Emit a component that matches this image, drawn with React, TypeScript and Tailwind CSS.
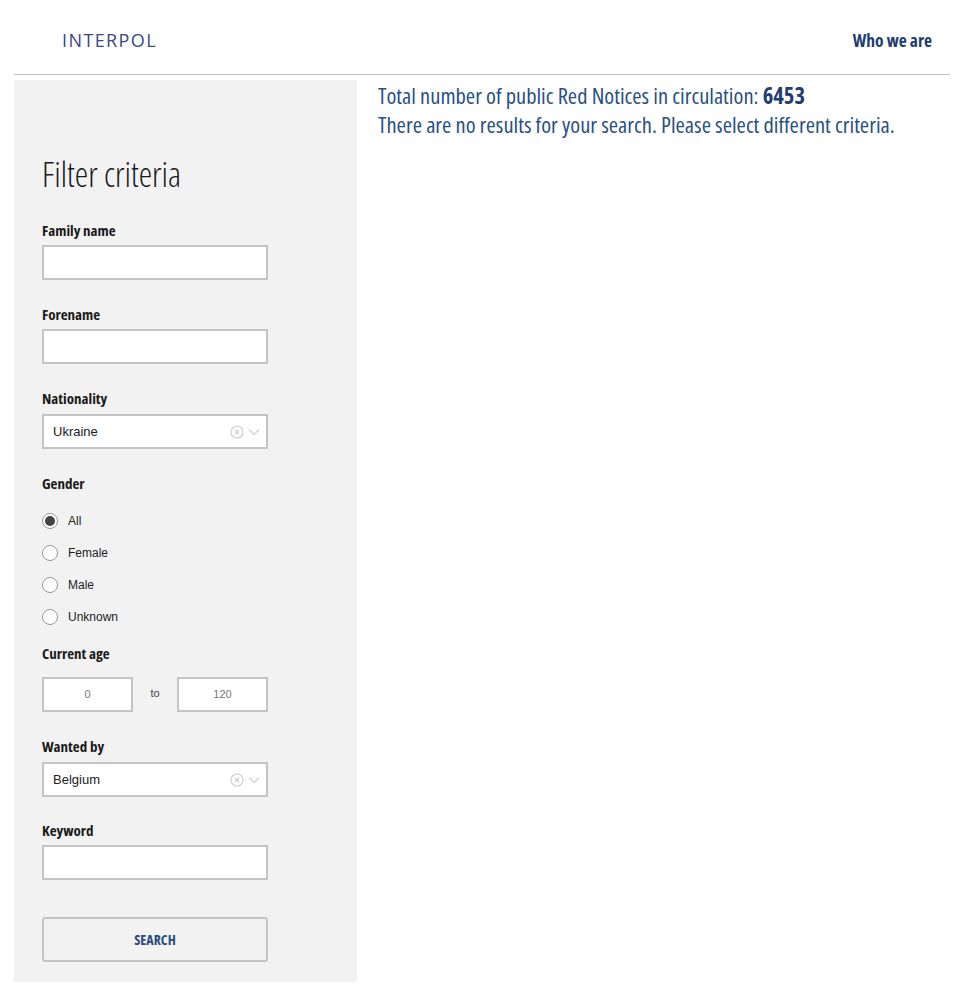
import { useState } from "react"

const cond = "font-['Open_Sans',sans-serif] font-stretch-[75%]"

const Label = ({ text }: { text: string }) => (
    <p className={`${cond} text-[15px] font-bold text-[#1a1a1a] leading-none`}>{text}</p>
)

const TextBox = () => (
    <input type="text" className="w-[226px] h-[35px] bg-white border-2 border-[#c4c4c4] outline-0 px-2" />
)

const SelectBox = ({ value }: { value: string }) => (
    <div className="w-[226px] h-[35px] bg-white border-2 border-[#c4c4c4] flex items-center justify-between pl-[9px] pr-[6px]">
        <span className="font-['Liberation_Sans',Arial,sans-serif] text-[13px] text-[#222]">{value}</span>
        <div className="flex items-center gap-[4px]">
            <svg width="14" height="14" viewBox="0 0 14 14" fill="none" stroke="#cfcfcf" strokeWidth="1.2">
                <circle cx="7" cy="7" r="6" />
                <path d="M5 5l4 4M9 5l-4 4" />
            </svg>
            <svg width="12" height="8" viewBox="0 0 12 8" fill="none" stroke="#cfcfcf" strokeWidth="1.2">
                <path d="M1 1.5l5 5 5-5" />
            </svg>
        </div>
    </div>
)

export default function App() {
    const [gender, setGender] = useState("All")

    return (
        <div className="w-[964px] min-h-[990px] bg-white">
            <header className="h-[74px] flex items-center justify-between pl-[62px] pr-[32px] pt-[6px]">
                <span className="font-['Open_Sans',sans-serif] text-[18px] tracking-[1.4px] text-[#37478a]">INTERPOL</span>
                <a href="#" className={`${cond} text-[17.5px] font-bold text-[#1f3d70]`}>Who we are</a>
            </header>
            <div className="mx-[14px] border-t border-[#bdbdbd]" />
            <div className="flex pl-[14px] pt-[5px]">
                <aside className="w-[343px] shrink-0 h-[902px] bg-[#f2f2f2] pl-[28px] pt-[77px]">
                    <h2 className={`${cond} text-[34px] font-light text-[#1a1a1a] leading-none`}>Filter criteria</h2>

                    <div className="mt-[32px] flex flex-col gap-[7px]">
                        <Label text="Family name" />
                        <TextBox />
                    </div>
                    <div className="mt-[27px] flex flex-col gap-[7px]">
                        <Label text="Forename" />
                        <TextBox />
                    </div>
                    <div className="mt-[27px] flex flex-col gap-[8px]">
                        <Label text="Nationality" />
                        <SelectBox value="Ukraine" />
                    </div>

                    <div className="mt-[27px]">
                        <Label text="Gender" />
                        <div className="mt-[22px] flex flex-col gap-[16px]">
                            {["All", "Female", "Male", "Unknown"].map((g) => (
                                <label key={g} className="h-[16px] flex items-center gap-[10px] cursor-pointer">
                                    <span className="w-[16px] h-[16px] rounded-full border border-[#9a9a9a] bg-white flex items-center justify-center">
                                        {gender === g && <span className="w-[10px] h-[10px] rounded-full bg-[#444]" />}
                                    </span>
                                    <input type="radio" className="hidden" checked={gender === g} onChange={() => setGender(g)} />
                                    <span className="font-['Liberation_Sans',Arial,sans-serif] text-[12px] text-[#222]">{g}</span>
                                </label>
                            ))}
                        </div>
                    </div>

                    <div className="mt-[21px]">
                        <Label text="Current age" />
                        <div className="mt-[16px] flex items-center">
                            <div className="w-[91px] h-[35px] bg-white border-2 border-[#c4c4c4] flex items-center justify-center font-['Liberation_Sans',Arial,sans-serif] text-[11px] text-[#777]">0</div>
                            <span className="w-[44px] text-center font-['Liberation_Sans',Arial,sans-serif] text-[11px] text-[#444] -mt-[2px]">to</span>
                            <div className="w-[91px] h-[35px] bg-white border-2 border-[#c4c4c4] flex items-center justify-center font-['Liberation_Sans',Arial,sans-serif] text-[11px] text-[#777]">120</div>
                        </div>
                    </div>

                    <div className="mt-[27px] flex flex-col gap-[8px]">
                        <Label text="Wanted by" />
                        <SelectBox value="Belgium" />
                    </div>
                    <div className="mt-[26px] flex flex-col gap-[7px]">
                        <Label text="Keyword" />
                        <TextBox />
                    </div>

                    <button className={`mt-[37px] w-[226px] h-[45px] bg-transparent border-2 border-[#c4c4c4] rounded-[3px] ${cond} text-[14px] font-bold text-[#2b4b7c]`}>SEARCH</button>
                </aside>
                <main className={`pl-[21px] pt-[1px] ${cond} text-[22.5px] leading-[29px] text-[#2a5185]`}>
                    <p>Total number of public Red Notices in circulation: <span className="font-bold text-[#1f3d70]">6453</span></p>
                    <p>There are no results for your search. Please select different criteria.</p>
                </main>
            </div>
        </div>
    )
}
